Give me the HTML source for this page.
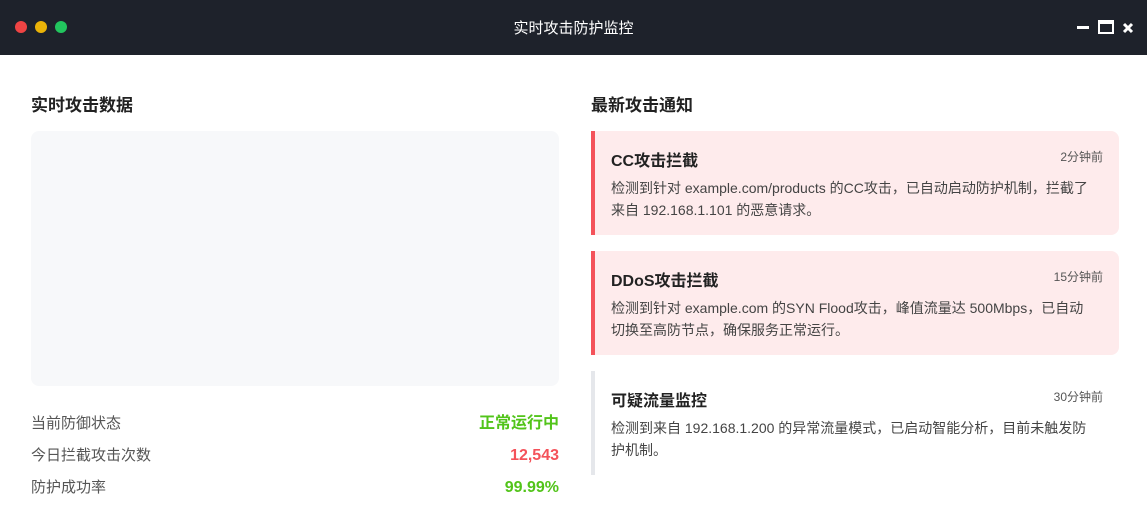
<!DOCTYPE html>
<html><head><meta charset="utf-8"><style>
*{margin:0;padding:0;box-sizing:border-box}
body{width:1147px;height:531px;background:#fff;font-family:"Liberation Sans","Noto Sans CJK SC",sans-serif;position:relative;overflow:hidden}
.bar{position:absolute;left:0;top:0;width:1147px;height:55px;background:#1e222b}
.dot{position:absolute;top:21px;width:12px;height:12px;border-radius:50%}
.title{position:absolute;left:0;right:0;top:17px;text-align:center;color:#fff;font-size:15px}
h2{position:absolute;font-size:17px;font-weight:bold;color:#222}
.chart{position:absolute;left:31px;top:131px;width:528px;height:255px;background:#f7f8fa;border-radius:8px}
.row{position:absolute;left:31px;width:528px;font-size:15px;color:#555;line-height:20px}
.row b{position:absolute;right:0;top:0;font-size:16px;line-height:20px}
.card{position:absolute;left:591px;width:528px;height:104px;border-left:4px solid #f4525a;background:#feebec;border-radius:0 8px 8px 0}
.card.g{border-left-color:#e5e7eb;background:#fff}
.card h3{position:absolute;left:16px;top:16px;font-size:16px;color:#222}
.card .t{position:absolute;right:16px;top:17px;font-size:12px;color:#555}
.card p{position:absolute;left:16px;top:46px;width:484px;font-size:14px;line-height:22px;color:#444}
</style></head><body>
<div class="bar">
<div class="dot" style="left:15px;background:#ef4444"></div>
<div class="dot" style="left:35px;background:#eab308"></div>
<div class="dot" style="left:55px;background:#22c55e"></div>
<div class="title">实时攻击防护监控</div>
<div style="position:absolute;left:1077px;top:26px;width:12px;height:3px;background:#fff"></div>
<div style="position:absolute;left:1098px;top:20px;width:16px;height:14px;border:2px solid #fff;border-top-width:4px"></div>
<svg style="position:absolute;left:1122px;top:22px" width="12" height="12" viewBox="0 0 12 12"><path d="M2 2L10 10M10 2L2 10" stroke="#fff" stroke-width="3"/></svg>
</div>
<h2 style="left:31px;top:91px">实时攻击数据</h2>
<h2 style="left:591px;top:91px">最新攻击通知</h2>
<div class="chart"></div>
<div class="row" style="top:414px">当前防御状态<b style="color:#52c41a">正常运行中</b></div>
<div class="row" style="top:446px">今日拦截攻击次数<b style="color:#f4525a">12,543</b></div>
<div class="row" style="top:478px">防护成功率<b style="color:#52c41a">99.99%</b></div>
<div class="card" style="top:131px"><h3>CC攻击拦截</h3><span class="t">2分钟前</span><p>检测到针对 example.com/products 的CC攻击，已自动启动防护机制，拦截了来自 192.168.1.101 的恶意请求。</p></div>
<div class="card" style="top:251px"><h3>DDoS攻击拦截</h3><span class="t">15分钟前</span><p>检测到针对 example.com 的SYN Flood攻击，峰值流量达 500Mbps，已自动切换至高防节点，确保服务正常运行。</p></div>
<div class="card g" style="top:371px"><h3>可疑流量监控</h3><span class="t">30分钟前</span><p>检测到来自 192.168.1.200 的异常流量模式，已启动智能分析，目前未触发防护机制。</p></div>
</body></html>
